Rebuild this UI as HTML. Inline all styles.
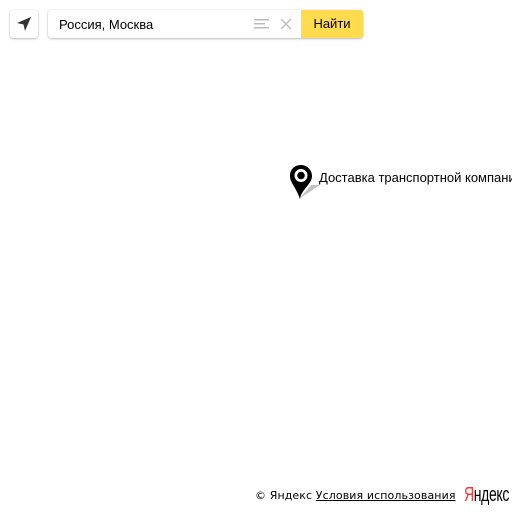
<!DOCTYPE html>
<html><head><meta charset="utf-8"><style>
body{margin:0;width:512px;height:512px;background:#fff;position:relative;overflow:hidden;font-family:"Liberation Sans",Arial,sans-serif}
.loc{position:absolute;left:10px;top:10px;width:28px;height:28px;background:#fff;border-radius:3px;box-shadow:0 1px 2px rgba(0,0,0,.25),0 0 1px rgba(0,0,0,.2)}
.box{position:absolute;left:48px;top:10px;width:315px;height:28px;border-radius:3px;box-shadow:0 1px 2px rgba(0,0,0,.25),0 0 1px rgba(0,0,0,.2);background:#fff;overflow:hidden}
.box .t{position:absolute;left:11px;top:7px;font-size:13px;color:#000}
.btn{position:absolute;right:0;top:0;width:62px;height:28px;background:#ffdb4d;font-size:13px;text-align:center;line-height:28px;color:#000}
.lbl{position:absolute;left:319px;top:170px;font-size:13px;color:#000;white-space:nowrap}
.foot{position:absolute;left:255px;top:489px;font-family:"DejaVu Sans",sans-serif;font-size:11px;color:#000;white-space:nowrap;letter-spacing:0.1px}
.logo{position:absolute;left:464px;top:484px;font-size:20px;color:#f33;transform:scaleX(.7);transform-origin:left top;letter-spacing:-0.5px;white-space:nowrap}
.logo span{color:#000}
</style></head><body>
<div class="loc"><svg width="28" height="28"><path d="M21 7 L7 13 L13.5 14.5 L15 21 Z" fill="#333"/></svg></div>
<div class="box"><div class="t">Россия, Москва</div>
<svg style="position:absolute;left:206px;top:8px" width="16" height="12"><rect x="0" y="1" width="15" height="1.5" fill="#bbb"/><rect x="0" y="5" width="11" height="1.5" fill="#bbb"/><rect x="0" y="9" width="15" height="1.5" fill="#bbb"/></svg>
<svg style="position:absolute;left:232px;top:8px" width="12" height="12"><path d="M1 1L11 11M11 1L1 11" stroke="#bbb" stroke-width="1.3"/></svg>
<div class="btn">Найти</div></div>
<svg style="position:absolute;left:289px;top:163px" width="34" height="40">
<path d="M10 36 L22 22 L31 22 Z" fill="#999" opacity=".6"/>
<path d="M12 2 C5 2 1 7 1 13 C1 20 7 24 11 36 C12 27 23 21 23 13 C23 7 18 2 12 2 Z" fill="#000"/>
<circle cx="12" cy="12.5" r="6.5" fill="#fff"/><circle cx="12" cy="12.5" r="3.8" fill="#000"/>
</svg>
<div class="lbl">Доставка транспортной компании</div>
<div class="foot">© Яндекс <u>Условия использования</u></div>
<div class="logo">Я<span>ндекс</span></div>
</body></html>
